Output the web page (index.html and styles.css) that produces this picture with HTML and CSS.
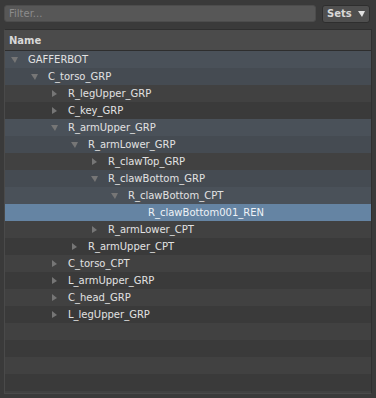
FILE: index.html
```html
<!DOCTYPE html>
<html>
<head>
<meta charset="utf-8">
<link rel="stylesheet" href="styles.css">
</head>
<body>
<div class="toolbar">
  <div class="filter">Filter...</div>
  <div class="sets">Sets <span class="caret"></span></div>
</div>
<div class="panel">
  <div class="header">Name</div>
  <div class="rows">
    <div class="row path l0"><span class="tri down"></span>GAFFERBOT</div>
    <div class="row path l1"><span class="tri down"></span>C_torso_GRP</div>
    <div class="row l2"><span class="tri right"></span>R_legUpper_GRP</div>
    <div class="row l2"><span class="tri right"></span>C_key_GRP</div>
    <div class="row path l2"><span class="tri down"></span>R_armUpper_GRP</div>
    <div class="row path l3"><span class="tri down"></span>R_armLower_GRP</div>
    <div class="row l4"><span class="tri right"></span>R_clawTop_GRP</div>
    <div class="row path l4"><span class="tri down"></span>R_clawBottom_GRP</div>
    <div class="row path l5"><span class="tri down"></span>R_clawBottom_CPT</div>
    <div class="row selected l6"><span class="tri"></span>R_clawBottom001_REN</div>
    <div class="row l4"><span class="tri right"></span>R_armLower_CPT</div>
    <div class="row l3"><span class="tri right"></span>R_armUpper_CPT</div>
    <div class="row l2"><span class="tri right"></span>C_torso_CPT</div>
    <div class="row l2"><span class="tri right"></span>L_armUpper_GRP</div>
    <div class="row l2"><span class="tri right"></span>C_head_GRP</div>
    <div class="row l2"><span class="tri right"></span>L_legUpper_GRP</div>
    <div class="row"></div>
    <div class="row"></div>
    <div class="row"></div>
    <div class="row"></div>
    <div class="row"></div>
  </div>
</div>
</body>
</html>
```
FILE: styles.css
```css
html, body {
  margin: 0;
  padding: 0;
  background: #3a3a3a;
  font-family: "DejaVu Sans", sans-serif;
  font-size: 10px;
  color: #e0e0e0;
}
body {
  padding: 5px 4px 0 4px;
  height: 398px;
  box-sizing: border-box;
  overflow: hidden;
}
.toolbar {
  display: flex;
  gap: 6px;
  height: 18px;
  padding-right: 2px;
}
.filter {
  flex: 1;
  height: 17px;
  box-sizing: border-box;
  background: #575757;
  border: 1px solid #4c4c4c;
  border-radius: 3px;
  color: #8c8c8c;
  line-height: 15px;
  padding-left: 4px;
}
.sets {
  width: 48px;
  height: 18px;
  box-sizing: border-box;
  background: #4f4f4f;
  border: 1px solid #2e2e2e;
  border-radius: 3px;
  font-weight: bold;
  color: #d8d8d8;
  line-height: 16px;
  padding-left: 4px;
  display: flex;
  align-items: center;
  gap: 6px;
}
.caret {
  width: 0;
  height: 0;
  border-left: 4px solid transparent;
  border-right: 3px solid transparent;
  border-top: 6px solid #e0e0e0;
}
.panel {
  margin-top: 6px;
  width: 368px;
  height: 365px;
  box-sizing: border-box;
  border: 1px solid #2f2f2f;
  border-left-color: #4a4a4a;
  border-bottom-color: #4a4a4a;
  overflow: hidden;
  background: #3c3c3c;
}
.header {
  height: 20px;
  background: #4b4b4b;
  border-bottom: 1px solid #2e2e2e;
  font-weight: bold;
  color: #d8d8d8;
  line-height: 21px;
  padding-left: 4px;
}
.row {
  height: 17px;
  line-height: 17px;
  display: flex;
  align-items: center;
  white-space: nowrap;
  color: #e2e2e2;
  background: #414141;
}
.row:nth-child(even) { background: #3a3a3a; }
.row.path { background: #4a5159; }
.row.path:nth-child(even) { background: #454b52; }
.row.selected { background: #6584a3; color: #eef2f6; }
.tri {
  flex: none;
  width: 17px;
  height: 17px;
  display: flex;
  align-items: center;
}
.tri.down::before {
  content: "";
  border-left: 4px solid transparent;
  border-right: 3px solid transparent;
  border-top: 6px solid #767676;
}
.tri.right::before {
  content: "";
  margin-left: 1px;
  border-top: 4px solid transparent;
  border-bottom: 3px solid transparent;
  border-left: 5px solid #767676;
}
.l0 { padding-left: 6px; }
.l1 { padding-left: 26px; }
.l2 { padding-left: 46px; }
.l3 { padding-left: 66px; }
.l4 { padding-left: 86px; }
.l5 { padding-left: 106px; }
.l6 { padding-left: 126px; }
```
